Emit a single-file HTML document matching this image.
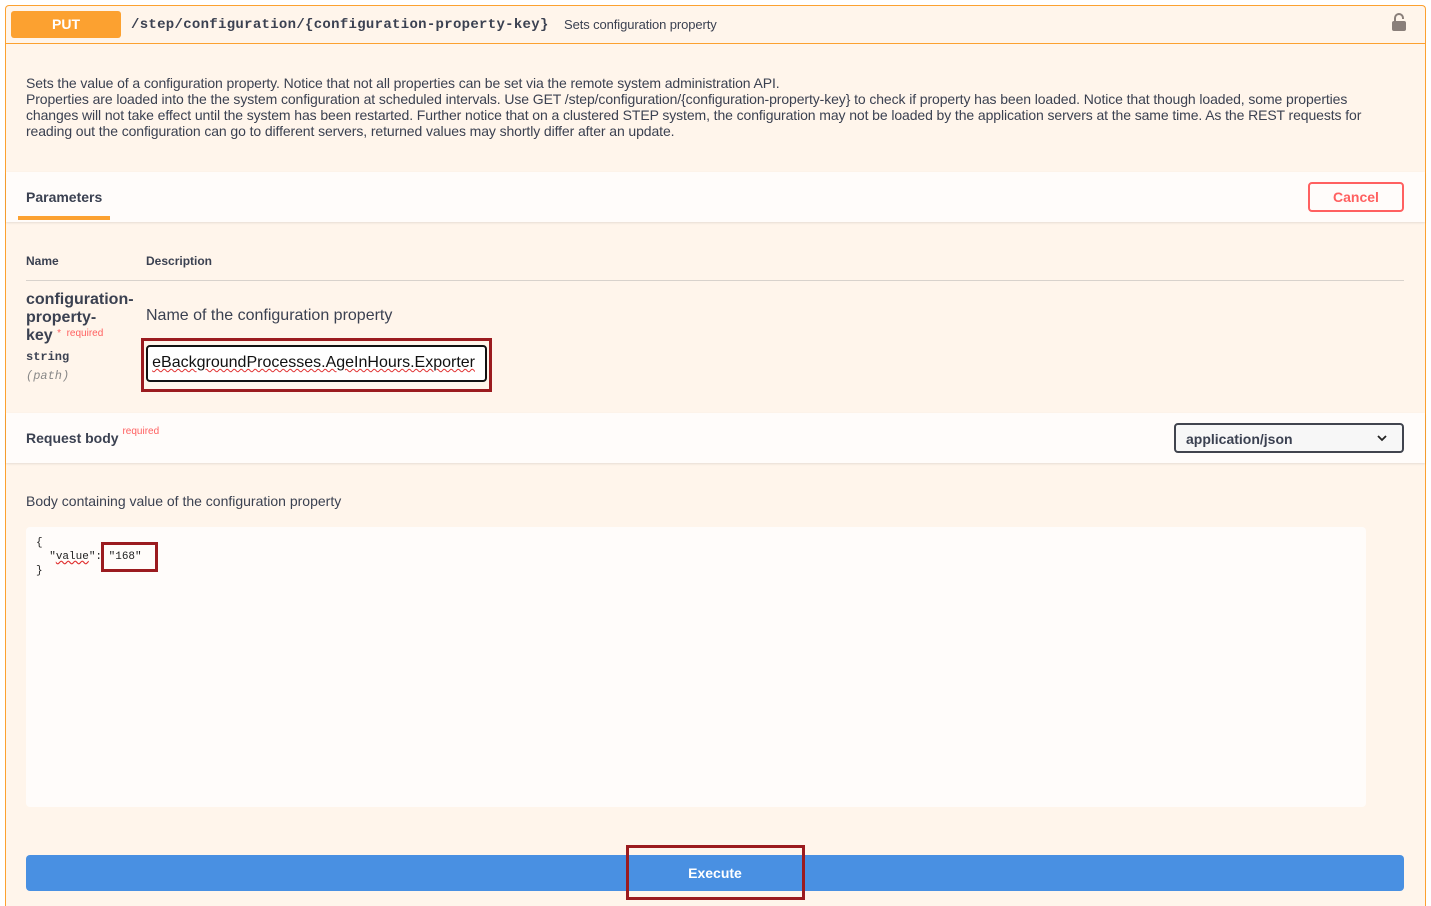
<!DOCTYPE html>
<html><head><meta charset="utf-8"><style>
*{margin:0;padding:0;box-sizing:border-box}
html,body{width:1431px;height:906px;overflow:hidden}
body{background:#fff;font-family:"Liberation Sans",sans-serif;color:#3b4151;position:relative}
.a{position:absolute}
#box{left:5px;top:5px;width:1421px;height:901px;border:1px solid #fca130;border-bottom:none;border-radius:4px 4px 0 0;background:#fff5eb}
.mono{font-family:"Liberation Mono",monospace}
</style></head><body>
<div id="box" class="a"></div>
<div class="a" style="left:6px;top:43px;width:1419px;height:1px;background:#fca130"></div>
<div class="a" style="left:11px;top:11px;width:110px;height:27px;background:#fca130;border-radius:3px;color:#fff;font-weight:bold;font-size:14px;text-align:center;line-height:27px">PUT</div>
<div class="a mono" style="left:131px;top:17px;font-size:14px;font-weight:bold;color:#3b4151;letter-spacing:0.3px">/step/configuration/{configuration-property-key}</div>
<div class="a" style="left:564px;top:17px;font-size:13px;color:#3b4151;letter-spacing:-0.1px">Sets configuration property</div>
<svg class="a" style="left:1391px;top:12px" width="16" height="20" viewBox="0 0 16 20"><path d="M4 9V6a4 4 0 0 1 8 0v1" fill="none" stroke="#8a7f7a" stroke-width="2"/><rect x="1" y="9" width="14" height="10" rx="2" fill="#8a7f7a"/></svg>
<div class="a" style="left:26px;top:75px;width:1362px;font-size:14px;line-height:16px;color:#3b4151;letter-spacing:-0.1px">Sets the value of a configuration property. Notice that not all properties can be set via the remote system administration API.<br>Properties are loaded into the the system configuration at scheduled intervals. Use GET /step/configuration/{configuration-property-key} to check if property has been loaded. Notice that though loaded, some properties changes will not take effect until the system has been restarted. Further notice that on a clustered STEP system, the configuration may not be loaded by the application servers at the same time. As the REST requests for reading out the configuration can go to different servers, returned values may shortly differ after an update.</div>
<div class="a" style="left:6px;top:172px;width:1419px;height:50px;background:#fffcfa;box-shadow:0 1px 2px rgba(0,0,0,.1)"></div>
<div class="a" style="left:26px;top:189px;font-size:14px;font-weight:bold">Parameters</div>
<div class="a" style="left:18px;top:216px;width:92px;height:4px;background:#fca130"></div>
<div class="a" style="left:1308px;top:182px;width:96px;height:30px;border:2px solid #ff6060;border-radius:4px;color:#ff6060;font-weight:bold;font-size:14px;text-align:center;line-height:26px;background:#fffcfa">Cancel</div>
<div class="a" style="left:26px;top:254px;font-size:12px;font-weight:bold">Name</div>
<div class="a" style="left:146px;top:254px;font-size:12px;font-weight:bold">Description</div>
<div class="a" style="left:26px;top:280px;width:1378px;height:1px;background:#d8d2cc"></div>
<div class="a" style="left:26px;top:291px;font-size:16px;font-weight:bold;line-height:18px">configuration-<br>property-<br>key <span style="color:#ff6060;font-size:10px;font-weight:normal;vertical-align:top;position:relative;top:-2px">*&nbsp; required</span></div>
<div class="a mono" style="left:26px;top:350px;font-size:12px;font-weight:bold;color:#3b4151">string</div>
<div class="a mono" style="left:26px;top:369px;font-size:12px;font-style:italic;color:#888">(path)</div>
<div class="a" style="left:146px;top:307px;font-size:16px">Name of the configuration property</div>
<div class="a" style="left:141px;top:338px;width:351px;height:54px;border:3px solid #9b1b1f"></div>
<div class="a" style="left:146px;top:345px;width:341px;height:37px;border:2px solid #111;border-radius:4px;background:#fff;overflow:hidden"><div style="position:absolute;right:10px;top:7px;font-size:16px;color:#111;white-space:nowrap;text-decoration:underline wavy #e03030;text-decoration-thickness:1px">eBackgroundProcesses.AgeInHours.Exporter</div></div>
<div class="a" style="left:6px;top:413px;width:1419px;height:50px;background:#fffcfa;box-shadow:0 1px 2px rgba(0,0,0,.1)"></div>
<div class="a" style="left:26px;top:430px;font-size:14px;font-weight:bold">Request body <span style="color:#ff6060;font-size:10px;font-weight:normal;vertical-align:top;position:relative;top:-4px">required</span></div>
<div class="a" style="left:1174px;top:423px;width:230px;height:30px;border:2px solid #41444e;border-radius:4px;background:#f7f7f7;font-size:14px;font-weight:bold;padding:6px 0 0 10px">application/json</div>
<svg class="a" style="left:1377px;top:434px" width="10" height="8" viewBox="0 0 10 8"><path d="M1 2l4 4 4-4" fill="none" stroke="#222" stroke-width="1.8"/></svg>
<div class="a" style="left:26px;top:493px;font-size:14px">Body containing value of the configuration property</div>
<div class="a" style="left:26px;top:527px;width:1340px;height:280px;background:#fffcfa;border-radius:4px"></div>
<div class="a mono" style="left:36px;top:536px;font-size:11px;line-height:14px;color:#222;white-space:pre">{
  "<span style="text-decoration:underline wavy #e03030">value</span>": "168"
}</div>
<div class="a" style="left:101px;top:542px;width:57px;height:30px;border:3px solid #9b1b1f"></div>
<div class="a" style="left:26px;top:855px;width:1378px;height:36px;background:#4990e2;border-radius:4px;color:#fff;font-weight:bold;font-size:14px;text-align:center;line-height:36px">Execute</div>
<div class="a" style="left:626px;top:845px;width:179px;height:55px;border:3px solid #9b1b1f"></div>
</body></html>
